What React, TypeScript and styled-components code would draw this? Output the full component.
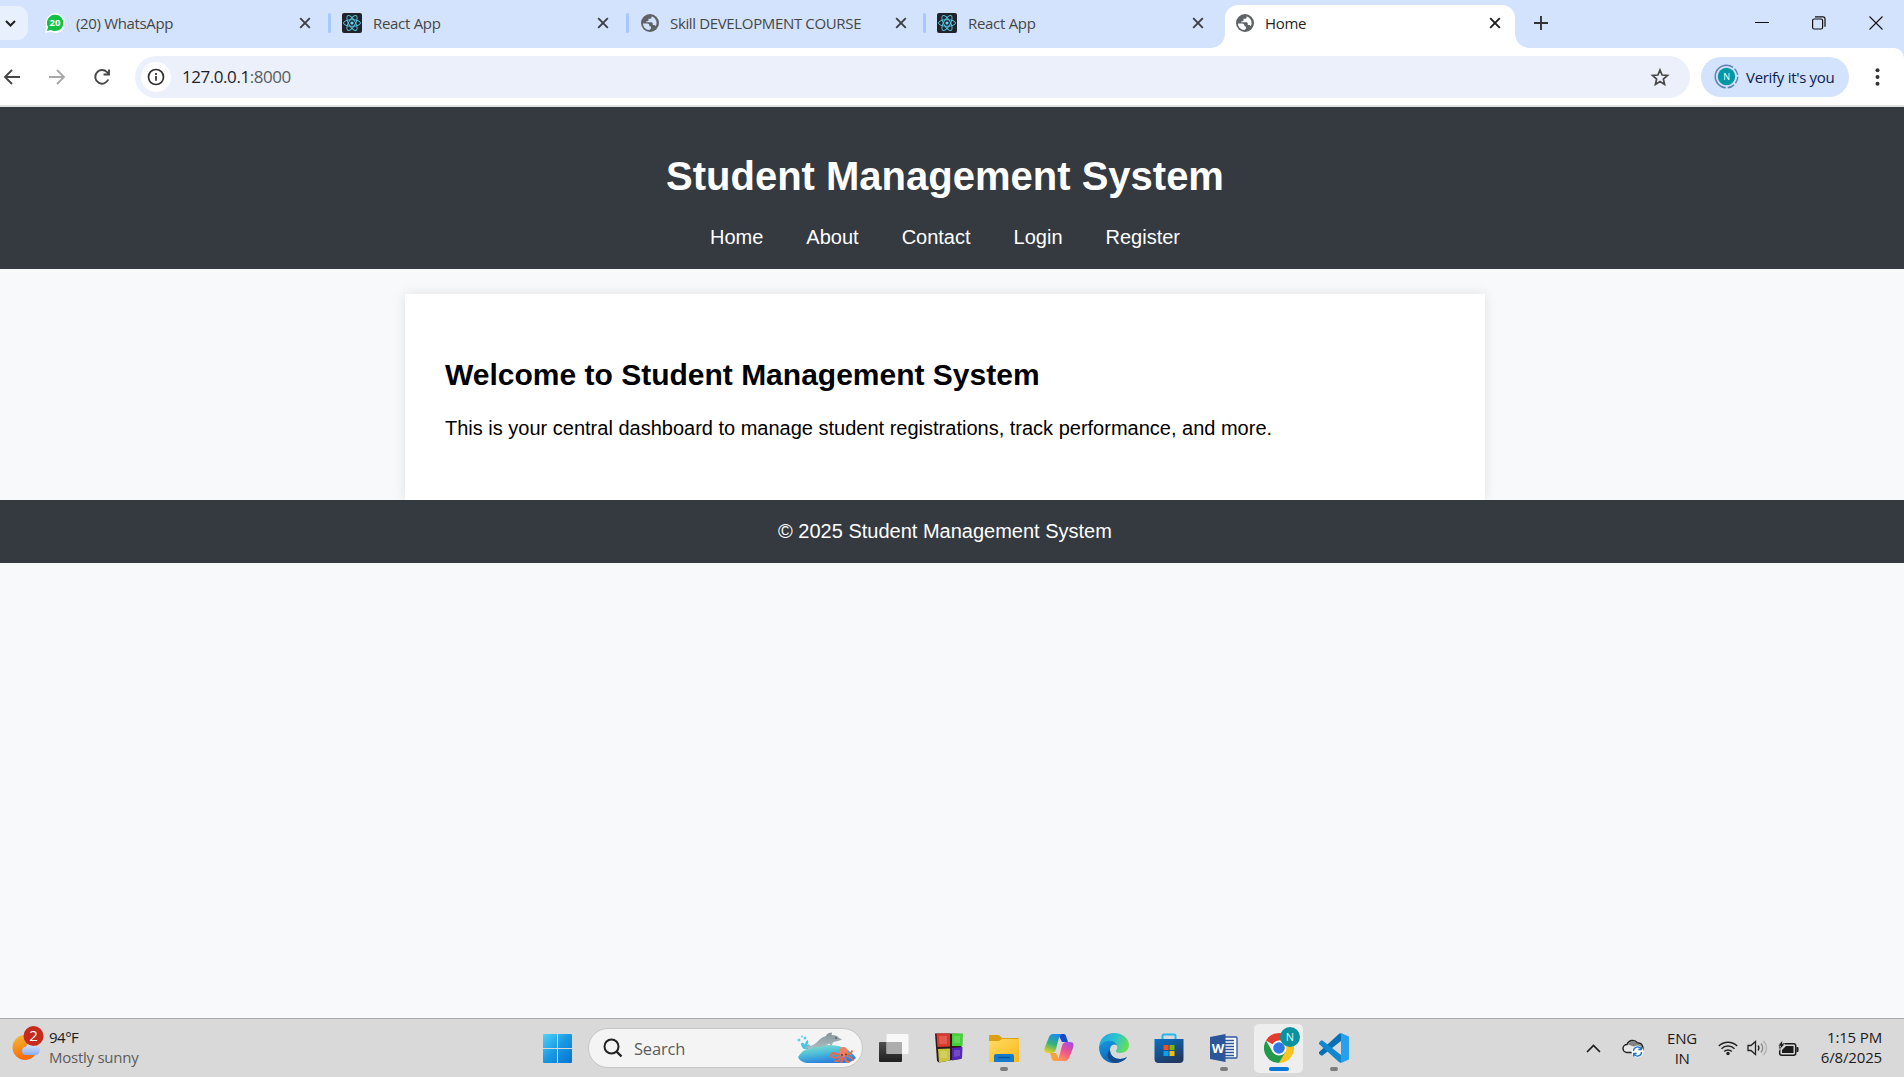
import React from "react";
import styled, { createGlobalStyle } from "styled-components";

const ui = `"Open Sans", "Noto Sans", sans-serif`;

const Global = createGlobalStyle`
  *, *::before, *::after { box-sizing: border-box; }
  html, body { margin: 0; padding: 0; overflow: hidden; }
  svg { display: block; flex: none; }
`;

const Screen = styled.div`
  width: 1904px;
  height: 1077px;
  display: flex;
  flex-direction: column;
  overflow: hidden;
  background: #d3e2fd;
  font-family: ${ui};
`;

/* ---------- browser window ---------- */
const TabStrip = styled.div`
  height: 48px;
  flex: none;
  display: flex;
  background: #d3e2fd;
`;
const TabSearch = styled.div`
  width: 28px;
  height: 34px;
  margin-top: 6px;
  padding-left: 4px;
  display: flex;
  align-items: center;
  background: #e9f0fd;
  border-radius: 0 11px 11px 0;
`;
const Tab = styled.div<{ $w: number; $active?: boolean; $pl: number; $pr: number }>`
  position: relative;
  width: ${(p) => p.$w}px;
  height: ${(p) => (p.$active ? 43 : 48)}px;
  margin-top: ${(p) => (p.$active ? 5 : 0)}px;
  padding: 0 ${(p) => p.$pr}px ${(p) => (p.$active ? 7 : 2)}px ${(p) => p.$pl}px;
  display: flex;
  align-items: center;
  background: ${(p) => (p.$active ? "#fff" : "transparent")};
  border-radius: 13px 13px 0 0;
  color: ${(p) => (p.$active ? "#1f1f1f" : "#454746")};
  ${(p) =>
    p.$active &&
    `&::before, &::after {
      content: ""; position: absolute; bottom: 0; width: 14px; height: 14px;
    }
    &::before { left: -14px; background: radial-gradient(circle at 0 0, transparent 13.5px, #fff 14px); }
    &::after { right: -14px; background: radial-gradient(circle at 100% 0, transparent 13.5px, #fff 14px); }`}
`;
const TabTitle = styled.span<{ $ls?: number }>`
  flex: 1;
  margin-left: 11px;
  font-size: 15px;
  line-height: 20px;
  white-space: nowrap;
  letter-spacing: ${(p) => p.$ls ?? 0}px;
`;
const TabDivider = styled.div`
  width: 3px;
  height: 20px;
  margin-top: 13px;
  border-radius: 2px;
  background: #a8c7fa;
`;
const NewTab = styled.div`
  width: 51px;
  display: flex;
  align-items: center;
  justify-content: center;
  padding-bottom: 2px;
`;
const WindowControls = styled.div`
  margin-left: auto;
  display: flex;
  align-items: center;
  gap: 43px;
  padding: 0 21px 3px 0;
`;
const Toolbar = styled.div`
  height: 57px;
  flex: none;
  display: flex;
  align-items: center;
  background: #fff;
  border-radius: 0 10px 0 0;
`;
const NavButtons = styled.div`
  width: 135px;
  display: flex;
  gap: 27px;
  padding-left: 3px;
`;
const AddressBar = styled.div`
  width: 1555px;
  height: 42px;
  display: flex;
  align-items: center;
  padding: 0 20px 0 6px;
  border-radius: 21px;
  background: #ebf0fa;
`;
const SiteInfo = styled.div`
  width: 30px;
  height: 30px;
  display: flex;
  align-items: center;
  justify-content: center;
  border-radius: 50%;
  background: #fff;
`;
const Url = styled.span`
  flex: 1;
  margin-left: 11px;
  font-size: 17px;
  letter-spacing: -0.45px;
  color: #1f1f1f;
  em { font-style: normal; color: #5a5d61; }
`;
const Profile = styled.div`
  width: 148px;
  height: 40px;
  margin-left: 11px;
  padding-left: 13px;
  display: flex;
  align-items: center;
  gap: 7px;
  border-radius: 21px;
  background: #d3e2fd;
  color: #0a2050;
  font-size: 15px;
  letter-spacing: -0.3px;
  white-space: nowrap;
`;
const MenuButton = styled.div`
  margin-left: 26px;
`;
const Rule = styled.div`
  height: 2px;
  flex: none;
  background: #dde1e0;
`;

/* ---------- web page ---------- */
const Page = styled.main`
  flex: 1;
  display: flex;
  flex-direction: column;
  background: #f8f9fb;
  font-family: "Liberation Sans", Arial, sans-serif;
  font-size: 20px;
`;
const Header = styled.header`
  height: 162px;
  padding: 44px 14px 0 0;
  background: #343a40;
  color: #fff;
  text-align: center;
`;
const Heading = styled.h1`
  margin: 0;
  font-size: 40px;
  line-height: 50px;
`;
const Nav = styled.nav`
  display: flex;
  justify-content: center;
  gap: 43px;
  margin-top: 24px;
  line-height: 24px;
`;
const Card = styled.section`
  width: 1080px;
  height: 206px;
  margin: 25px 0 0 405px;
  padding: 61px 40px 0;
  background: #fff;
  box-shadow: 0 0 12px rgba(0, 0, 0, 0.1);
`;
const CardTitle = styled.h2`
  margin: 0;
  font-size: 30px;
  line-height: 40px;
`;
const CardText = styled.p`
  margin: 20px 0 0;
  line-height: 26px;
`;
const Footer = styled.footer`
  position: relative;
  height: 63px;
  padding-right: 14px;
  background: #343a40;
  color: #fff;
  line-height: 63px;
  text-align: center;
`;

/* ---------- taskbar ---------- */
const Taskbar = styled.div`
  height: 59px;
  flex: none;
  display: flex;
  background: #d9d9d9;
  border-top: 1px solid #a9a9a9;
  color: #1b1b1b;
`;
const Weather = styled.div`
  width: 530px;
  display: flex;
  padding: 6px 0 0 12px;
  gap: 5px;
`;
const Lines = styled.div<{ $align?: string; $top?: number; $bottom?: number }>`
  display: flex;
  flex-direction: column;
  padding-top: ${(p) => p.$top ?? 0}px;
  padding-bottom: ${(p) => p.$bottom ?? 0}px;
  text-align: ${(p) => p.$align ?? "left"};
  font-size: 15px;
  line-height: 20px;
  white-space: nowrap;
`;
const Line = styled.span<{ $ls: number; $muted?: boolean }>`
  letter-spacing: ${(p) => p.$ls}px;
  color: ${(p) => (p.$muted ? "#5c5c5c" : "inherit")};
`;
const StartButton = styled.div`
  width: 58px;
  padding: 15px 0 0 13px;
`;
const SearchBox = styled.div`
  width: 275px;
  height: 40px;
  margin-top: 9px;
  padding: 0 5px 0 14px;
  display: flex;
  align-items: center;
  background: #f4f4f4;
  border: 1px solid #c6c6c6;
  border-radius: 20px;
  color: #5c5c5c;
  font-size: 16.5px;
  letter-spacing: -0.2px;
  span { flex: 1; margin-left: 11px; }
`;
const Apps = styled.div`
  display: flex;
  margin-left: 3px;
`;
const AppButton = styled.div<{ $focused?: boolean }>`
  width: 49px;
  height: 49px;
  margin: 5px 3px 0;
  display: flex;
  flex-direction: column;
  align-items: center;
  padding-top: 8px;
  border-radius: 5px;
  background: ${(p) => (p.$focused ? "#eeeeee" : "transparent")};
`;
const AppIcon = styled.div<{ $badged?: boolean }>`
  height: 31px;
  display: flex;
  align-items: flex-end;
  justify-content: center;
  padding-left: ${(p) => (p.$badged ? 6 : 0)}px;
`;
const Running = styled.i<{ $focused?: boolean }>`
  width: ${(p) => (p.$focused ? 20 : 8)}px;
  height: 4px;
  margin-top: 4px;
  border-radius: 2px;
  background: ${(p) => (p.$focused ? "#0a78d6" : "#7c7c7c")};
`;
const Tray = styled.div`
  margin-left: auto;
  display: flex;
  align-items: center;
  padding-right: 22px;
`;
const TrayItem = styled.div<{ $w: number; $end?: boolean }>`
  width: ${(p) => p.$w}px;
  display: flex;
  justify-content: ${(p) => (p.$end ? "flex-end" : "center")};
`;

/* ---------- icons ---------- */
const CloseIcon = ({ color = "#3c4043" }: { color?: string }) => (
  <svg width="12" height="12" viewBox="0 0 12 12" stroke={color} strokeWidth="1.9">
    <path d="M1.2 1.2 10.8 10.8M10.8 1.2 1.2 10.8" />
  </svg>
);
const ReactIcon = () => (
  <svg width="20" height="20" viewBox="0 0 20 20">
    <rect width="20" height="20" rx="2" fill="#20232a" />
    <g fill="none" stroke="#53c1de" strokeWidth="1">
      <ellipse cx="10" cy="10" rx="8.5" ry="3.3" />
      <ellipse cx="10" cy="10" rx="8.5" ry="3.3" transform="rotate(60 10 10)" />
      <ellipse cx="10" cy="10" rx="8.5" ry="3.3" transform="rotate(120 10 10)" />
    </g>
    <circle cx="10" cy="10" r="1.6" fill="#61dafb" />
  </svg>
);
const GlobeIcon = ({ land = "#d3e2fd" }: { land?: string }) => (
  <svg width="18" height="18" viewBox="0 0 18 18">
    <circle cx="9" cy="9" r="9" fill="#5f6368" />
    <path d="M2 9.6h4.2c1.3 0 2.2.8 2.2 1.9 0 .9.8 1 1.5 1v2.2l-1.6 1.3C4.9 16 2 13.3 2 9.6ZM10.6 2.2v1c0 1-.8 1.500-1.800 1.500H7.500v1.600c0 .6-.4 1-1 1H5.300v1h4.900c.9 0 1.600.7 1.600 1.600v1h1c.9 0 1.600.5 1.900 1.300A7 7 0 0 0 10.600 2.200Z" fill={land} />
  </svg>
);
const WhatsAppIcon = () => (
  <svg width="20" height="20" viewBox="0 0 20 20">
    <path d="M0 20 1.500 14A9.800 9.800 0 1 1 6 18.800Z" fill="#fff" />
    <path d="M2 18 3 14A8.200 8.200 0 1 1 6 17Z" fill="#12c144" />
    <text x="10" y="13.400" fontSize="9.500" fontWeight="700" fontFamily="Open Sans" textAnchor="middle" fill="#fff">20</text>
  </svg>
);
const ArrowIcon = ({ color, flip }: { color: string; flip?: boolean }) => (
  <svg width="18" height="18" viewBox="0 0 18 18" fill="none" stroke={color} strokeWidth="1.9">
    <path d={flip ? "M1 9h15M9 2l7 7-7 7" : "M17 9H2M9 2 2 9l7 7"} />
  </svg>
);
const ReloadIcon = () => (
  <svg width="18" height="18" viewBox="0 0 18 18" fill="none" stroke="#474747" strokeWidth="1.900">
    <path d="M15.300 11.500A6.800 6.800 0 1 1 14 4.200l2 2.100M16 1.500v5h-5.500" />
  </svg>
);
const InfoIcon = () => (
  <svg width="18" height="18" viewBox="0 0 18 18" fill="none" stroke="#303030" strokeWidth="1.700">
    <circle cx="9" cy="9" r="7.500" />
    <path d="M9 8v4.800M9 5v1.900" />
  </svg>
);
const StarIcon = () => (
  <svg width="20" height="20" viewBox="0 0 20 20" fill="none" stroke="#474747" strokeWidth="1.700">
    <path d="m10 3 2.100 5 5.400.5-4.100 3.600 1.200 5.400-4.600-2.900-4.600 2.900 1.200-5.400L2.500 8.500l5.400-.5Z" />
  </svg>
);
const AvatarIcon = () => (
  <svg width="25" height="25" viewBox="0 0 25 25">
    <circle cx="12.500" cy="12.500" r="11.300" fill="none" stroke="#5b7fb8" strokeWidth="1.400" strokeDasharray="7 2 7 2 7 2 7 2 35 0" transform="rotate(-90 12.500 12.500)" />
    <circle cx="12.500" cy="12.500" r="8.700" fill="#0097a7" />
    <text x="12.500" y="15.800" fontSize="9" fontFamily="Open Sans" textAnchor="middle" fill="#fff">N</text>
  </svg>
);
const WeatherIcon = () => (
  <svg width="32" height="36" viewBox="0 0 32 36">
    <defs>
      <linearGradient id="sun" x1="0" y1="0" x2="0.3" y2="1"><stop stopColor="#f5bd34" /><stop offset="1" stopColor="#f56a0c" /></linearGradient>
      <linearGradient id="cloud" x1="0" y1="0" x2="0" y2="1"><stop stopColor="#dfeaff" /><stop offset="1" stopColor="#88aef0" /></linearGradient>
    </defs>
    <circle cx="13" cy="22.500" r="12.500" fill="url(#sun)" />
    <path d="M14 30a4 4 0 0 1 0-8 5.500 5.500 0 0 1 9.800-1.300 4.700 4.700 0 0 1 0 9.300Z" fill="url(#cloud)" />
    <circle cx="21.500" cy="11" r="10" fill="#c42b1c" />
    <text x="21.500" y="16.300" fontSize="15" fontFamily="Open Sans" textAnchor="middle" fill="#fff">2</text>
  </svg>
);
const WindowsIcon = () => (
  <svg width="29" height="29" viewBox="0 0 29 29">
    <defs><linearGradient id="win" x1="0" y1="0" x2="1" y2="1"><stop stopColor="#4fd2fc" /><stop offset=".5" stopColor="#1798e2" /><stop offset="1" stopColor="#0573d0" /></linearGradient></defs>
    <path d="M1 0h13v14H0V1Q0 0 1 0ZM15 0h13q1 0 1 1v13H15ZM0 15h14v14H1q-1 0-1-1ZM15 15h14v13q0 1-1 1H15Z" fill="url(#win)" />
  </svg>
);
const SearchIcon = () => (
  <svg width="20" height="20" viewBox="0 0 20 20" fill="none" stroke="#222" strokeWidth="2">
    <circle cx="8.500" cy="8.500" r="7" /><path d="m13.500 13.500 5 5" strokeWidth="2.400" />
  </svg>
);
const DolphinIcon = () => (
  <svg width="60" height="32" viewBox="0 0 60 32">
    <defs>
      <linearGradient id="sea" x1="0" y1="0" x2="0.400" y2="1"><stop stopColor="#8be4cf" /><stop offset=".5" stopColor="#4fc0d6" /><stop offset="1" stopColor="#2a80de" /></linearGradient>
      <linearGradient id="fin" x1="0" y1="0" x2="0" y2="1"><stop stopColor="#84959a" /><stop offset="1" stopColor="#b0bfc2" /></linearGradient>
    </defs>
    <path d="M1 25C6 16 18 13 31 13s22 4 28 13c-4 4-8 5-13 5H13C6 31 3 29 1 25Z" fill="url(#sea)" />
    <path d="M4 11q3-1 4 2 0-4 3-5 1 3-1 5 2-1 3 0l-1 4H7Q4 15 4 11Z" fill="#45c4e8" />
    <circle cx="2" cy="8" r="1.500" fill="#62cdea" /><circle cx="8" cy="6" r="1.500" fill="#62cdea" /><circle cx="5" cy="4.500" r="1" fill="#62cdea" />
    <path d="M8 16q1-3 5-2 5-1 9-6 3-3 7-4 0-2 3-3l3-.5-.500 2.500q6 0 7.500 3l3 1.500-4 1.500q-3 0-5 1.500l-2 4-1.500-3q-6 4-12 3.500-4 0-6 .5-1 2-4 2.500 1-2 .5-2.500Z" fill="url(#fin)" />
    <circle cx="39" cy="6" r=".8" fill="#333" />
    <g fill="none" stroke="#f0684b" strokeWidth="1.800" strokeLinecap="round">
      <path d="M42 22q-3 1-5-1-3 0-3 3M43 24q-4 3-8 1M44 26q-2 4-6 3M46 26q0 3-2 4M48 26q1 4 4 4M50 24q4 1 6 4M49 22q5 1 6-3" />
    </g>
    <ellipse cx="46.500" cy="20" rx="4.200" ry="5" fill="#f57e5c" />
    <circle cx="45" cy="23" r=".9" fill="#633" /><circle cx="49" cy="22.500" r=".9" fill="#633" />
  </svg>
);
const TaskViewIcon = () => (
  <svg width="30" height="30" viewBox="0 0 30 30">
    <defs><linearGradient id="tvd" x1="0" y1="0" x2="0" y2="1"><stop stopColor="#4e4e4e" /><stop offset="1" stopColor="#1f1f1f" /></linearGradient></defs>
    <rect x="0" y="9" width="23" height="20" rx="1" fill="url(#tvd)" />
    <rect x="7.500" y="1" width="22" height="20" rx="1" fill="#fff" opacity=".82" />
    <path d="M7.500 9H23v12H7.500Z" fill="#9d9d9d" opacity=".75" />
  </svg>
);
const BlocksIcon = () => (
  <svg width="30" height="30" viewBox="0 0 30 30">
    <path d="M1 .5h14L28 1l-1 25-9 1-13 2.500L3 28Z" fill="#2a1c1c" />
    <path d="M2.500.5H16v13L3.500 14Z" fill="#dc3a2c" /><path d="M18 .5h11l-.5 12.500H18Z" fill="#45cf38" />
    <path d="m4 16 12-.5V27.500L5 29.500Z" fill="#c9c63c" /><path d="M18 15l10.500-1L28 25.500l-10 2Z" fill="#5526b8" />
    <path d="M5 3h8v8H5.500ZM20 3h6v7h-6ZM6 18h7v7H6.500ZM20 17h6v6l-6 1Z" fill="#fff" opacity=".17" />
  </svg>
);
const FolderIcon = () => (
  <svg width="30" height="30" viewBox="0 0 30 30">
    <defs><linearGradient id="fold" x1="0" y1="0" x2="1" y2="1"><stop stopColor="#ffdc66" /><stop offset="1" stopColor="#fbb716" /></linearGradient></defs>
    <path d="M0 3q0-1 1-1h8q1 0 2 1l2 2h16q1 0 1 1v5H0Z" fill="#dda010" />
    <path d="M0 8h10l3-2h17v23H0Z" fill="url(#fold)" />
    <path d="M5 29v-6q0-2 2-2h16q2 0 2 2v6Z" fill="#137bc9" /><path d="M9 24.500h12" stroke="#07529b" strokeWidth="1.500" />
  </svg>
);
const CopilotIcon = () => (
  <svg width="30" height="30" viewBox="0 0 30 30">
    <defs>
      <linearGradient id="cpa" x1="0.5" y1="0" x2="0.2" y2="1"><stop stopColor="#1b8ce8" /><stop offset=".5" stopColor="#35b27c" /><stop offset="1" stopColor="#f2d21c" /></linearGradient>
      <linearGradient id="cpb" x1="0.8" y1="0" x2="0.3" y2="1"><stop stopColor="#a24be8" /><stop offset=".5" stopColor="#f0518e" /><stop offset="1" stopColor="#ff9558" /></linearGradient>
    </defs>
    <path d="M14 1h5c3 0 3 2 4 5l1 3h-6Z" fill="#1748c8" />
    <path d="M9 1h9c-3 1-4 8-6 15-1 3-2 4-5 4H4c-4 0-4-3-3-6L5 4c1-2 2-3 4-3Z" fill="url(#cpa)" />
    <path d="M16 28h-5c-3 0-3-2-4-5l-1-3h6Z" fill="#f9a13b" />
    <path d="M21 28h-9c3-1 4-8 6-15 1-3 2-4 5-4h3c4 0 4 3 3 6l-4 10c-1 2-2 3-4 3Z" fill="url(#cpb)" />
  </svg>
);
const EdgeIcon = () => (
  <svg width="30" height="30" viewBox="0 0 30 30">
    <defs>
      <linearGradient id="ega" x1="0" y1="0.3" x2="1" y2="0.6"><stop stopColor="#20a5e2" /><stop offset=".5" stopColor="#2dc3cf" /><stop offset="1" stopColor="#6be050" /></linearGradient>
      <linearGradient id="egb" x1="0" y1="0" x2="0.5" y2="1"><stop stopColor="#1698dd" /><stop offset="1" stopColor="#0d63ba" /></linearGradient>
    </defs>
    <path d="M0 14C1 5 7 0 15 0c9 0 15 6 15 12 0 5-4 8-9 8-3 0-4-1-4-2s2-2 1-5C15 6 4 7 0 14Z" fill="url(#ega)" />
    <path d="M0 14C4 6 15 6 18 12c-5-2-7 2-7 5 0 6 5 9 10 9 3 0 5-1 7-2-3 4-8 6-13 6C6 30 0 23 0 14Z" fill="url(#egb)" />
    <path d="M11 17c0 6 5 9 10 9 3 0 5-1 7-2-3 4-8 6-13 6-6-2-9-9-4-13Z" fill="#154c8c" />
  </svg>
);
const StoreIcon = () => (
  <svg width="30" height="30" viewBox="0 0 30 30">
    <defs><linearGradient id="sto" x1="0" y1="0" x2="0.5" y2="1"><stop stopColor="#0872c7" /><stop offset="1" stopColor="#203962" /></linearGradient></defs>
    <path d="M8.500 7V3q0-1.500 1.500-1.500h10q1.500 0 1.500 1.500v4" fill="none" stroke="#27b5eb" strokeWidth="2" />
    <path d="M.5 6h29v20q0 4-4 4h-21q-4 0-4-4Z" fill="url(#sto)" />
    <path d="M9.500 12h5v5h-5Z" fill="#f25022" /><path d="M15.500 12h5v5h-5Z" fill="#7fba00" />
    <path d="M9.500 18h5v5h-5Z" fill="#00a4ef" /><path d="M15.500 18h5v5h-5Z" fill="#ffb900" />
  </svg>
);
const WordIcon = () => (
  <svg width="30" height="30" viewBox="0 0 30 30">
    <path d="M14 4h13q1 0 1 1v19q0 1-1 1H14Z" fill="#fff" stroke="#2b579a" strokeWidth="1.300" />
    <path d="M16 7.500h9M16 10.500h9M16 13.500h9M16 16.500h9M16 19.500h9M16 22.500h9" stroke="#2b579a" strokeWidth="1.500" />
    <path d="M1 4 16.500 1v28L1 26Z" fill="#2b579a" />
    <text x="9" y="20" fontSize="13" fontWeight="700" fontFamily="Open Sans" textAnchor="middle" fill="#fff">W</text>
  </svg>
);
const ChromeIcon = () => (
  <svg width="36" height="36" viewBox="0 0 36 36">
    <path d="M15 21 2 13.500A15 15 0 0 1 28 13.500L15 13.500Z" fill="#e33b2e" />
    <path d="M15 21 28 13.500A15 15 0 0 1 15 36L21.500 24.700Z" fill="#fcc31e" />
    <path d="M15 21 21.500 24.700 15 36A15 15 0 0 1 2 13.500L8.500 24.700Z" fill="#229a49" />
    <circle cx="15" cy="21" r="7.500" fill="#fff" /><circle cx="15" cy="21" r="5.800" fill="#2f78e6" />
    <circle cx="26" cy="10" r="10" fill="#0a929f" />
    <text x="26" y="14" fontSize="11" fontFamily="Open Sans" textAnchor="middle" fill="#d8f4f5">N</text>
  </svg>
);
const CodeIcon = () => (
  <svg width="30" height="30" viewBox="0 0 30 30">
    <path d="M22 8 3.500 22.500 2 22.500 0 20.500v-1.500L20.500.5 22 1Z" fill="#0870b5" />
    <path d="M22 22 3.500 7.500 2 7.500 0 9.500V11L20.500 29.500 22 29Z" fill="#1187cf" />
    <path d="m22 0 8 3.500v23L22 30l-1.500-.5 1.500-1V1.500L20.500.5Z" fill="#27a1ee" />
  </svg>
);
const TrayCloud = () => (
  <svg width="22" height="20" viewBox="0 0 22 20">
    <path d="M5 14.500a4 4 0 0 1 0-8 6 6 0 0 1 10.500-1.500A5 5 0 0 1 18 14.500Z" fill="#e8e8e8" stroke="#222" strokeWidth="1.500" />
    <path d="M6 6.500a5 5 0 0 1 9-1 5 5 0 0 1 5 6Z" fill="#858585" />
    <circle cx="15.500" cy="13.500" r="6" fill="#fff" />
    <path d="M11.500 13a4 4 0 0 1 7.500-2M19.500 14a4 4 0 0 1-7.500 2M19.300 8.500v3h-3M11.700 18.500v-3h3" fill="none" stroke="#1a73c9" strokeWidth="1.300" />
  </svg>
);
const WifiIcon = () => (
  <svg width="20" height="16" viewBox="0 0 20 16" fill="none" stroke="#222" strokeWidth="1.500">
    <path d="M.8 6a13 13 0 0 1 18.400 0M3.500 8.800a9.200 9.200 0 0 1 13 0M6.200 11.500a5.400 5.400 0 0 1 7.600 0" />
    <circle cx="10" cy="13.500" r="1.700" fill="#222" stroke="none" />
  </svg>
);
const VolumeIcon = () => (
  <svg width="21" height="16" viewBox="0 0 21 16" fill="none" stroke="#222" strokeWidth="1.300">
    <path d="M1 5.500h3L8.500 1.500v13L4 10.500H1ZM11 5.500q2 2.500 0 5" />
    <path d="M14 3.500q3.500 4.500 0 9" stroke="#888" /><path d="M16.500 1q6 7 0 14" stroke="#b0b0b0" />
  </svg>
);
const BatteryIcon = () => (
  <svg width="21" height="17" viewBox="0 0 21 17">
    <rect x="1.700" y="3.700" width="16" height="11.600" rx="2" fill="none" stroke="#1b1b1b" strokeWidth="1.500" />
    <path d="M8 6h7.500v7H4v-3Z" fill="#1b1b1b" /><path d="M18.500 7h1q1 0 1 1v3q0 1-1 1h-1Z" fill="#1b1b1b" />
    <path d="M4.500 0 0 6h2.500L1 10.500l6-6.500H4.500Z" fill="#1b1b1b" stroke="#d9d9d9" strokeWidth=".7" />
  </svg>
);

const apps = [
  { icon: <TaskViewIcon /> },
  { icon: <BlocksIcon /> },
  { icon: <FolderIcon />, running: true },
  { icon: <CopilotIcon /> },
  { icon: <EdgeIcon /> },
  { icon: <StoreIcon /> },
  { icon: <WordIcon />, running: true },
  { icon: <ChromeIcon />, running: true, focused: true },
  { icon: <CodeIcon />, running: true },
];

export default function App() {
  return (
    <Screen>
      <Global />
      <TabStrip>
        <TabSearch>
          <svg width="13" height="9" viewBox="0 0 13 9" fill="none" stroke="#1f1f1f" strokeWidth="2"><path d="m2 2 4.500 4.500L11 2" /></svg>
        </TabSearch>
        <Tab $w={300} $pl={17} $pr={17}><WhatsAppIcon /><TabTitle $ls={-0.35}>(20) WhatsApp</TabTitle><CloseIcon /></Tab>
        <TabDivider />
        <Tab $w={295} $pl={11} $pr={17}><ReactIcon /><TabTitle $ls={-0.3}>React App</TabTitle><CloseIcon /></Tab>
        <TabDivider />
        <Tab $w={294} $pl={12} $pr={16}><GlobeIcon /><TabTitle $ls={-0.35}>Skill DEVELOPMENT COURSE</TabTitle><CloseIcon /></Tab>
        <TabDivider />
        <Tab $w={299} $pl={11} $pr={21}><ReactIcon /><TabTitle $ls={-0.3}>React App</TabTitle><CloseIcon /></Tab>
        <Tab $w={290} $pl={11} $pr={14} $active><GlobeIcon land="#fff" /><TabTitle $ls={-0.3}>Home</TabTitle><CloseIcon color="#1f1f1f" /></Tab>
        <NewTab>
          <svg width="14" height="14" viewBox="0 0 14 14" stroke="#333" strokeWidth="1.900"><path d="M7 0v14M0 7h14" /></svg>
        </NewTab>
        <WindowControls>
          <svg width="14" height="14" viewBox="0 0 14 14" stroke="#111"><path d="M0 6.500h14" /></svg>
          <svg width="14" height="14" viewBox="0 0 14 14" fill="none" stroke="#111" strokeWidth="1.200"><rect x=".6" y="3" width="10" height="10" rx="1.500" /><path d="M3 .8h8q2 0 2 2v8" /></svg>
          <svg width="14" height="14" viewBox="0 0 14 14" stroke="#111" strokeWidth="1.100"><path d="m.5.5 13 13M13.500.5l-13 13" /></svg>
        </WindowControls>
      </TabStrip>
      <Toolbar>
        <NavButtons><ArrowIcon color="#474747" /><ArrowIcon color="#a9a9a9" flip /><ReloadIcon /></NavButtons>
        <AddressBar>
          <SiteInfo><InfoIcon /></SiteInfo>
          <Url>127.0.0.1<em>:8000</em></Url>
          <StarIcon />
        </AddressBar>
        <Profile><AvatarIcon />Verify it's you</Profile>
        <MenuButton>
          <svg width="5" height="18" viewBox="0 0 5 18" fill="#333"><circle cx="2.500" cy="2.200" r="2" /><circle cx="2.500" cy="9" r="2" /><circle cx="2.500" cy="15.800" r="2" /></svg>
        </MenuButton>
      </Toolbar>
      <Rule />
      <Page>
        <Header>
          <Heading>Student Management System</Heading>
          <Nav><span>Home</span><span>About</span><span>Contact</span><span>Login</span><span>Register</span></Nav>
        </Header>
        <Card>
          <CardTitle>Welcome to Student Management System</CardTitle>
          <CardText>This is your central dashboard to manage student registrations, track performance, and more.</CardText>
        </Card>
        <Footer>© 2025 Student Management System</Footer>
      </Page>
      <Taskbar>
        <Weather>
          <WeatherIcon />
          <Lines $top={2}><Line $ls={-0.5}>94°F</Line><Line $ls={-0.25} $muted>Mostly sunny</Line></Lines>
        </Weather>
        <StartButton><WindowsIcon /></StartButton>
        <SearchBox><SearchIcon /><span>Search</span><DolphinIcon /></SearchBox>
        <Apps>
          {apps.map((a, i) => (
            <AppButton key={i} $focused={a.focused}>
              <AppIcon $badged={a.focused}>{a.icon}</AppIcon>
              {a.running && <Running $focused={a.focused} />}
            </AppButton>
          ))}
        </Apps>
        <Tray>
          <TrayItem $w={40}><svg width="15" height="9" viewBox="0 0 15 9" fill="none" stroke="#1b1b1b" strokeWidth="1.600"><path d="m1 8 6.500-6.500L14 8" /></svg></TrayItem>
          <TrayItem $w={40}><TrayCloud /></TrayItem>
          <TrayItem $w={58}><Lines $align="center"><Line $ls={-0.2}>ENG</Line><Line $ls={-0.4}>IN</Line></Lines></TrayItem>
          <TrayItem $w={34}><WifiIcon /></TrayItem>
          <TrayItem $w={24}><VolumeIcon /></TrayItem>
          <TrayItem $w={39}><BatteryIcon /></TrayItem>
          <TrayItem $w={74} $end><Lines $align="right" $bottom={2}><Line $ls={-0.15}>1:15 PM</Line><Line $ls={-0.15}>6/8/2025</Line></Lines></TrayItem>
        </Tray>
      </Taskbar>
    </Screen>
  );
}
